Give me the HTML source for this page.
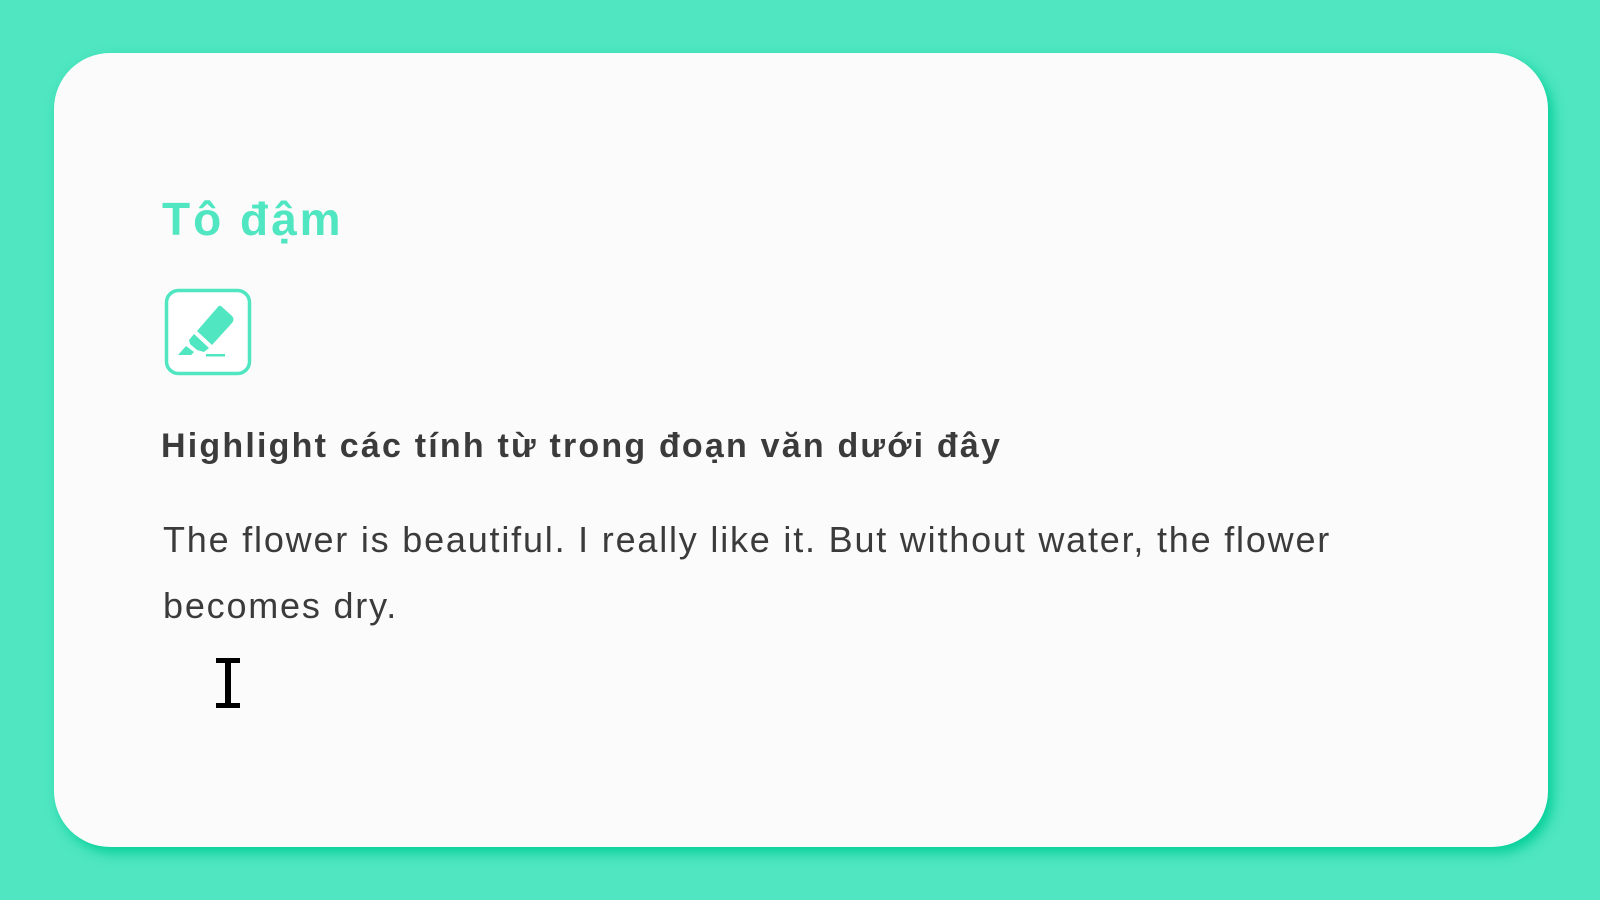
<!DOCTYPE html>
<html><head><meta charset="utf-8"><style>
html,body{margin:0;padding:0}
body{width:1600px;height:900px;background:#4fe6c1;position:relative;overflow:hidden;font-family:"Liberation Sans",sans-serif}
.card{position:absolute;left:54px;top:53px;width:1494px;height:794px;background:#fbfbfb;border-radius:56px;box-shadow:5px 6px 12px rgba(0,205,150,0.95)}
.t{position:absolute;left:162px;top:192px;font-size:46px;font-weight:bold;color:#4fe6c1;white-space:nowrap;letter-spacing:3px}
.h{position:absolute;left:161px;top:427px;font-size:34px;font-weight:bold;color:#3b3b3b;white-space:nowrap;letter-spacing:2.2px}
.p{position:absolute;left:163px;top:507px;width:1260px;font-size:36px;line-height:66px;color:#3b3b3b;letter-spacing:1.8px}
.icon{position:absolute;left:164px;top:288px}
.cur{position:absolute;left:214px;top:656px}
</style></head><body>
<div class="card"></div>
<div class="t">Tô đậm</div>
<svg class="icon" width="88" height="88" viewBox="0 0 88 88">
<rect x="2.5" y="2.5" width="83" height="83" rx="12" fill="#fff" stroke="#4fe6c1" stroke-width="3.5"/>
<g fill="#4fe6c1">
<path d="M57 18 L68 28 Q71 31 68 35 L48 57 L33 43 L53 20 Q55 17 57 18Z"/>
<path d="M30 46 L45 60 L40 64 L33 62 L26 56 L25 52Z"/>
<path d="M22 58 L30 64 L27 67 L14 67Z"/>
<rect x="42" y="66" width="19" height="2.5"/>
</g>
</svg>
<div class="h">Highlight các tính từ trong đoạn văn dưới đây</div>
<div class="p">The flower is beautiful. I really like it. But without water, the flower becomes dry.</div>
<svg class="cur" width="32" height="54" viewBox="0 0 32 54">
<g fill="#000"><rect x="11" y="4" width="6" height="46"/><rect x="2" y="2" width="24" height="5"/><rect x="2" y="47" width="24" height="5"/></g>
</svg>
</body></html>
